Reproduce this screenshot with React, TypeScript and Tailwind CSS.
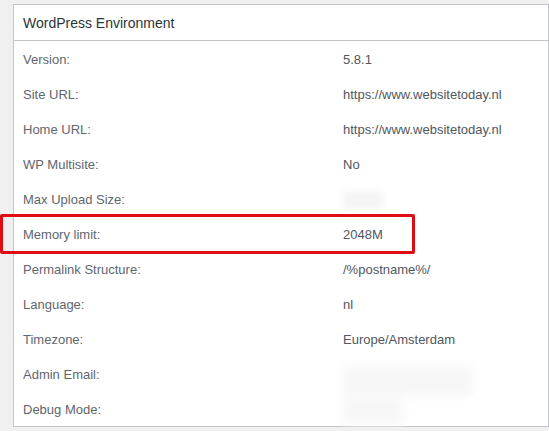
const rows: { label: string; value?: string; blur?: "short" | "email" | "debug" }[] = [
  { label: "Version:", value: "5.8.1" },
  { label: "Site URL:", value: "https://www.websitetoday.nl" },
  { label: "Home URL:", value: "https://www.websitetoday.nl" },
  { label: "WP Multisite:", value: "No" },
  { label: "Max Upload Size:", blur: "short" },
  { label: "Memory limit:", value: "2048M" },
  { label: "Permalink Structure:", value: "/%postname%/" },
  { label: "Language:", value: "nl" },
  { label: "Timezone:", value: "Europe/Amsterdam" },
  { label: "Admin Email:", blur: "email" },
  { label: "Debug Mode:", blur: "debug" },
];

export default function App() {
  return (
    <div className="relative w-[549px] h-[431px] overflow-hidden bg-[#f0f0f1] pt-[4px] pl-[13px] font-['Liberation_Sans',Arial,sans-serif]">
      <div className="w-[536px] h-[423px] border border-[#c3c4c7] bg-white">
        <div className="h-[36px] border-b border-[#c3c4c7] flex items-center pl-[9px] pt-[1px] text-[14px] text-[#2c3338]">
          WordPress Environment
        </div>
        {rows.map((r) => (
          <div key={r.label} className="h-[35px] flex items-center pt-[2px] text-[13px]">
            <div className="w-[329px] pl-[9px] text-[#5f666d]">{r.label}</div>
            <div className="text-[#50575e]">
              {r.value}
              {r.blur === "short" && <div className="w-[40px] h-[18px] bg-[#f5f5f5] blur-[3px]" />}
              {r.blur === "email" && <div className="w-[130px] h-[30px] mt-[12px] bg-[#f7f7f7] blur-[5px]" />}
              {r.blur === "debug" && <div className="w-[60px] h-[28px] bg-[#f7f7f7] blur-[5px]" />}
            </div>
          </div>
        ))}
      </div>
      <div className="absolute left-0 top-[214px] w-[415px] h-[40px] border-[3px] border-[#e00d14] rounded-[2px]" />
    </div>
  );
}
